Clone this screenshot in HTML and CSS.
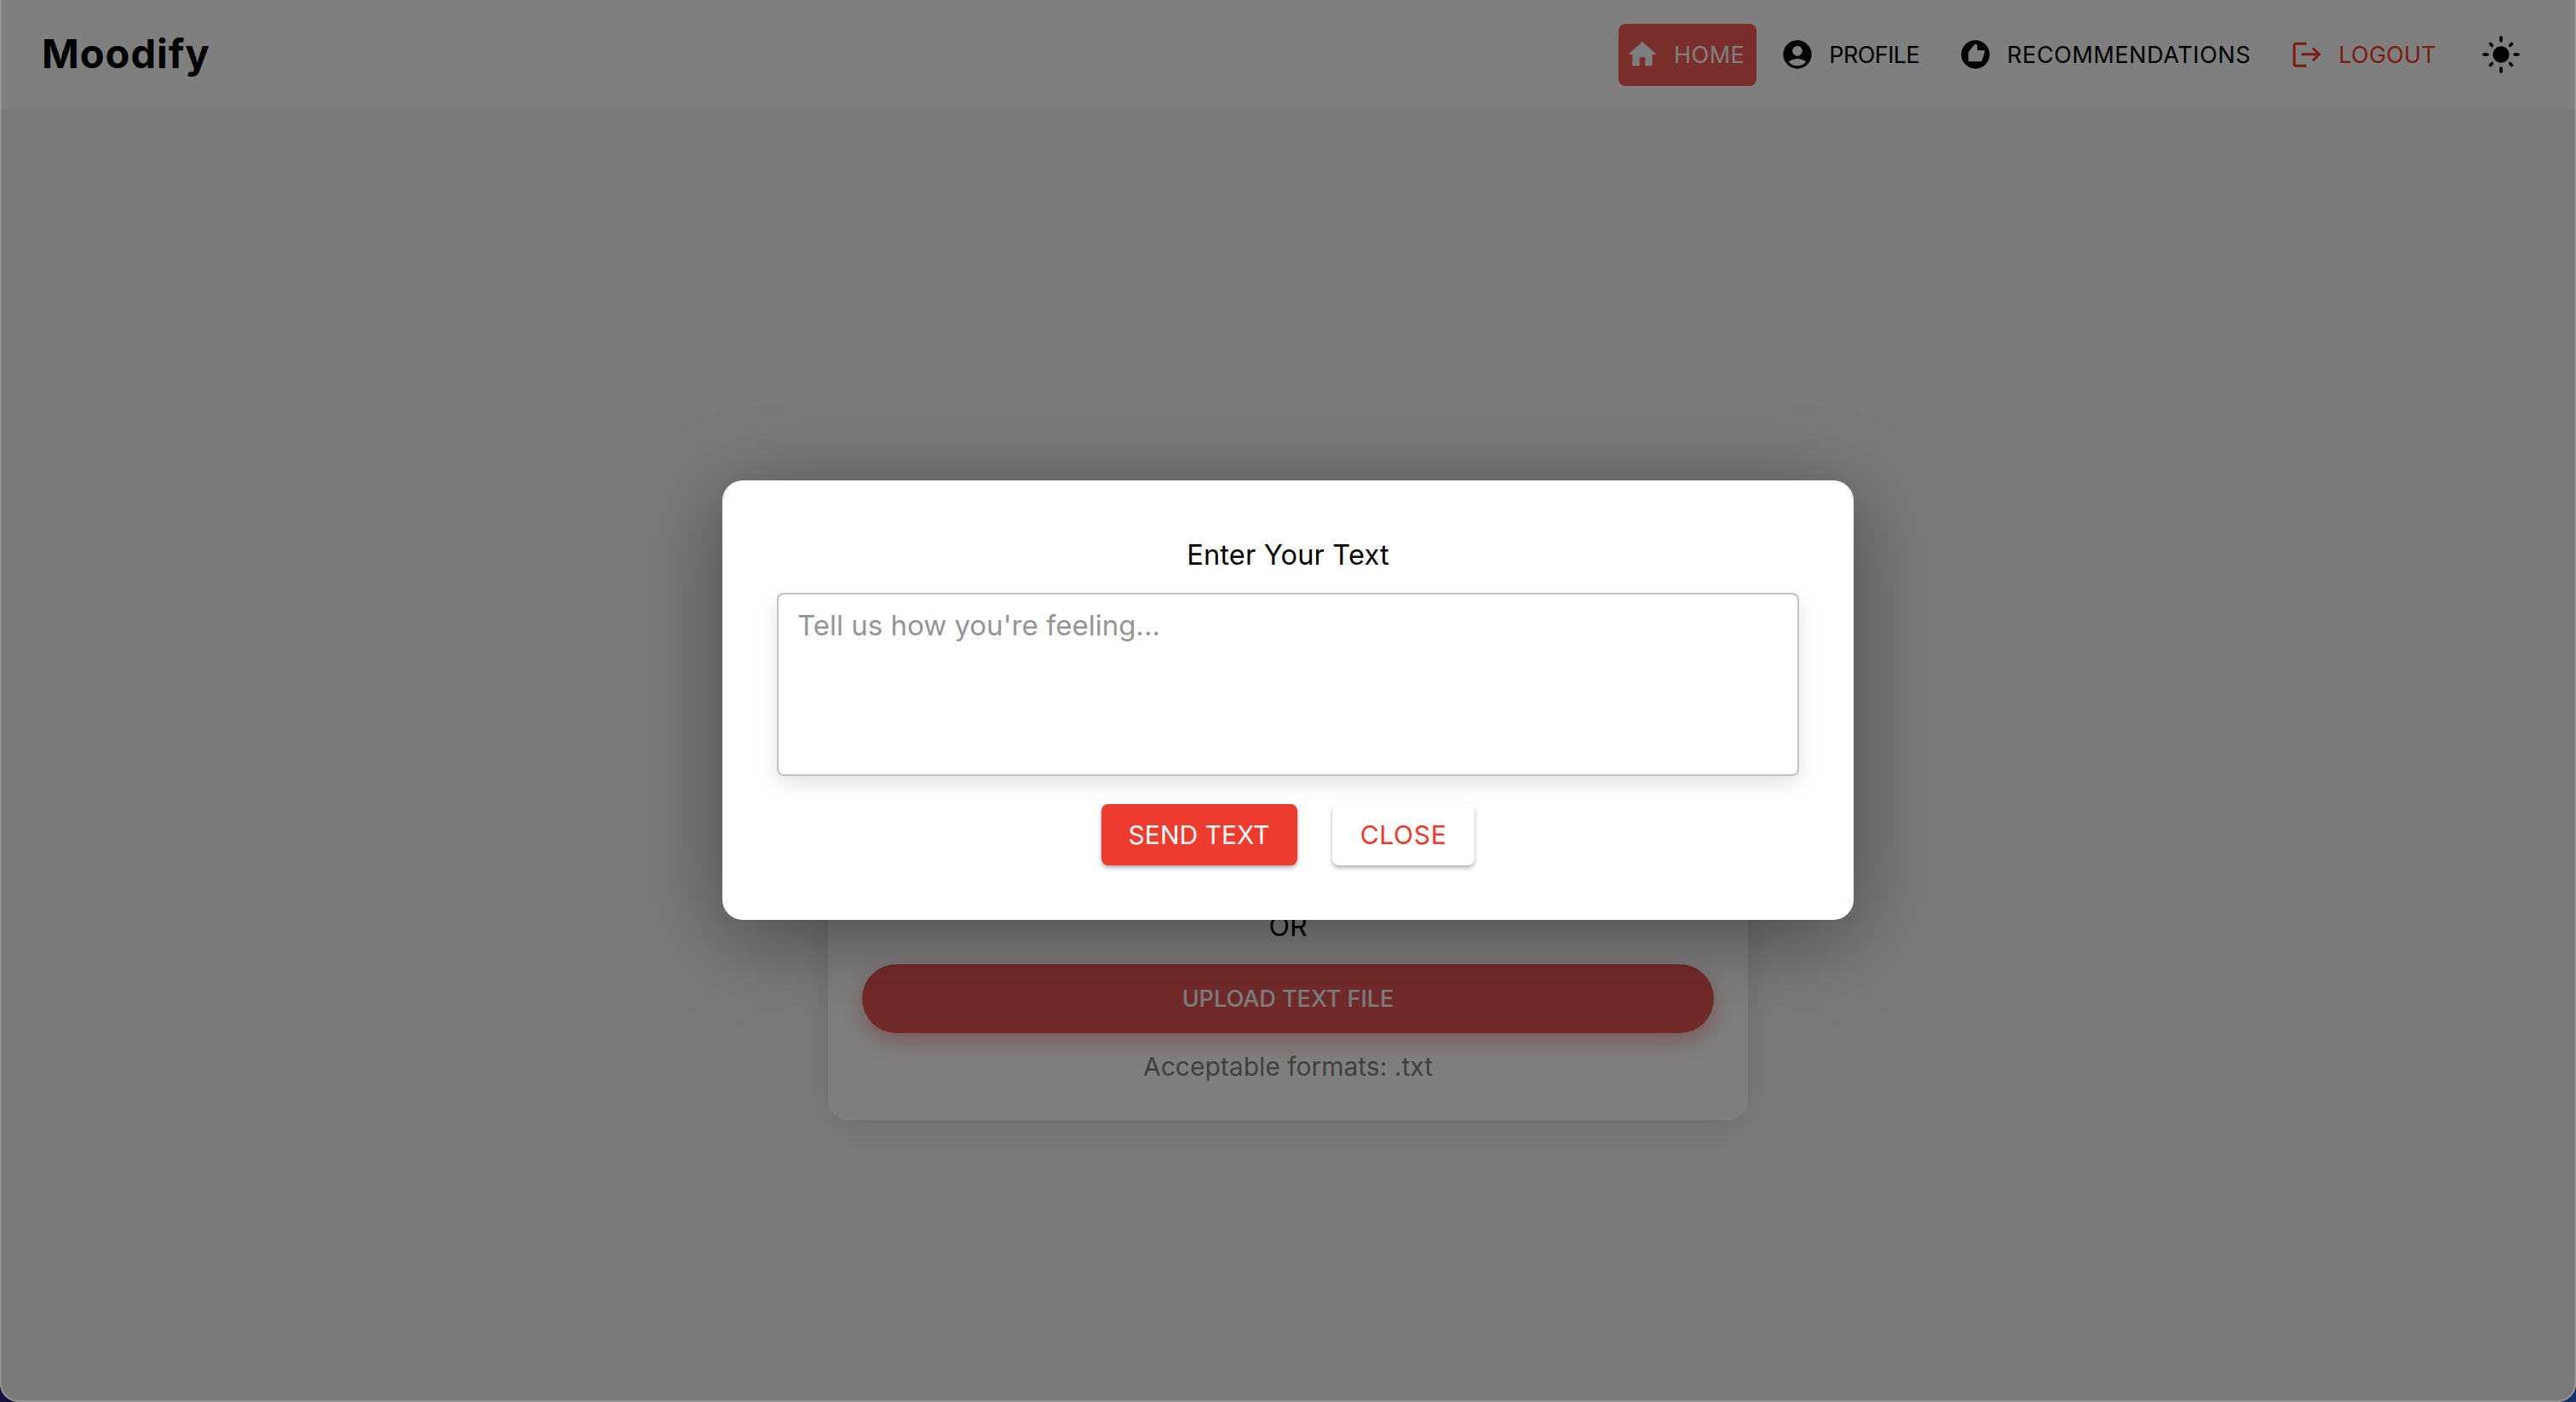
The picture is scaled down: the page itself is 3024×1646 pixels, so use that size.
FILE: index.html
```html
<!DOCTYPE html>
<html lang="en">
<head>
<meta charset="utf-8">
<title>Moodify</title>
<link rel="stylesheet" href="styles.css">
</head>
<body>
<div class="window">
  <header class="nav">
    <div class="brand">Moodify</div>
    <nav class="links">
      <a class="link active"><svg class="icon" viewBox="0 0 24 24"><path d="M10 20v-6h4v6h5v-8h3L12 3 2 12h3v8z"/></svg><span class="t-home">HOME</span></a>
      <a class="link"><svg class="icon" viewBox="0 0 24 24"><path d="M12 2C6.48 2 2 6.48 2 12s4.48 10 10 10 10-4.48 10-10S17.52 2 12 2zm0 4c1.93 0 3.5 1.57 3.500 3.500S13.930 13 12 13s-3.500-1.570-3.500-3.500S10.070 6 12 6zm0 14c-2.030 0-4.430-.820-6.140-2.880C7.550 15.800 9.680 15 12 15s4.450.800 6.140 2.120C16.430 19.180 14.030 20 12 20z"/></svg><span class="t-profile">PROFILE</span></a>
      <a class="link"><svg class="icon" viewBox="0 0 24 24"><path fill-rule="evenodd" d="M12 2C6.480 2 2 6.480 2 12s4.480 10 10 10 10-4.480 10-10S17.520 2 12 2zM7 10.200 11.400 5c.6-.7 1.900-.3 1.900.8V9h4.200c.8 0 1.200.7 1 1.400l-1.900 6c-.1.4-.5.6-.9.6H8c-.6 0-1-.4-1-1z"/></svg><span class="t-rec">RECOMMENDATIONS</span></a>
      <a class="link danger"><svg class="icon line" viewBox="0 0 40 40"><path d="M19.700 7.300H7.200a2 2 0 0 0-2 2v22a2 2 0 0 0 2 2h12.500"/><path d="M13.700 19.800h21M27 12.500l7.500 7.300-7.500 7.300"/></svg><span class="t-logout">LOGOUT</span></a>
      <button class="theme" aria-label="theme"><svg class="sun" viewBox="0 0 44 44"><circle cx="22" cy="22" r="9.700"/><g class="rays"><path d="M22 2v4M22 38v4M2 22h4M38 22h4M9.500 9.500l2 2M32.500 32.500l2 2M9.500 34.500l2-2M32.500 11.500l2-2"/></g></svg></button>
    </nav>
  </header>
  <main class="main">
    <section class="card">
      <p class="or">OR</p>
      <button class="upload">UPLOAD TEXT FILE</button>
      <p class="formats">Acceptable formats: .txt</p>
    </section>
  </main>
  <div class="overlay">
    <div class="modal">
      <h2 class="title">Enter Your Text</h2>
      <textarea class="input" placeholder="Tell us how you're feeling..."></textarea>
      <div class="actions">
        <button class="btn primary">SEND TEXT</button>
        <button class="btn secondary">CLOSE</button>
      </div>
    </div>
  </div>
</div>
</body>
</html>
```
FILE: styles.css
```css
* { box-sizing: border-box; }
html, body { margin: 0; height: 100%; }
body {
  background: linear-gradient(90deg, #1a1040 0%, #1c2f6a 100%);
  font-family: "Inter", "Noto Sans", sans-serif;
  overflow: hidden;
}
.window {
  position: relative;
  height: 1646px;
  display: flex;
  flex-direction: column;
  background: #f5f5f5;
  border-radius: 0 0 22px 22px;
  overflow: hidden;
}
.nav {
  height: 128px;
  flex: none;
  display: flex;
  align-items: center;
  justify-content: space-between;
  padding: 0 66px 0 49px;
  background: #fff;
}
.brand { font-size: 47px; font-weight: 700; color: #000; letter-spacing: 1px; padding-bottom: 3px; }
.links { display: flex; align-items: center; gap: 20px; }
.link {
  display: flex;
  align-items: center;
  gap: 17px;
  height: 73px;
  padding: 0 18px 0 8px;
  border-radius: 8px;
  font-size: 27px;
  color: #000;
  white-space: nowrap;
}
.link.active { background: #f45c58; color: #fff; padding-right: 14px; }
.link.danger { color: #f4362a; }
.t-home { letter-spacing: 0.5px; }
.t-profile { letter-spacing: -0.6px; }
.t-rec { letter-spacing: 0.6px; }
.t-logout { letter-spacing: 0.2px; }
.icon { width: 40px; height: 40px; fill: currentColor; flex: none; }
.icon.line { fill: none; stroke: currentColor; stroke-width: 3; }
.theme { border: 0; background: none; padding: 0; margin-left: 16px; display: flex; }
.sun { width: 44px; height: 44px; fill: #000; }
.rays { fill: none; stroke: #000; stroke-width: 3.6; stroke-linecap: round; }
.main { flex: 1; display: flex; justify-content: center; align-items: flex-start; padding-top: 500px; }
.card {
  width: 1080px;
  height: 687px;
  padding: 0 40px 42px;
  display: flex;
  flex-direction: column;
  align-items: center;
  justify-content: flex-end;
  background: #fff;
  border-radius: 24px;
  box-shadow: 0 4px 40px rgba(0,0,0,.12);
}
.or { margin: 0 0 20px; font-size: 32px; color: #000; line-height: 48px; }
.upload {
  width: 1000px;
  height: 81px;
  border: 0;
  border-radius: 41px;
  background: #e65654;
  color: #fff;
  font: 500 27px "Inter", "Noto Sans", sans-serif;
  box-shadow: 0 10px 26px rgba(230,86,84,.45);
}
.formats { margin: 18px 0 0; font-size: 30px; line-height: 42px; color: #808080; }
.overlay {
  position: absolute;
  inset: 0;
  display: flex;
  align-items: center;
  justify-content: center;
  background: rgba(0,0,0,.5);
  border: 2px solid rgba(255,255,255,.18);
  border-top: 0;
  border-radius: 0 0 22px 22px;
}
.modal {
  width: 1328px;
  height: 516px;
  padding: 64px 64px 0;
  display: flex;
  flex-direction: column;
  align-items: center;
  background: #fff;
  border-radius: 24px;
  box-shadow: 0 20px 100px rgba(0,0,0,.4);
}
.title { margin: 0; font-size: 32.5px; font-weight: 400; line-height: 48px; letter-spacing: 0.2px; color: #000; }
.input {
  width: 1200px;
  height: 215px;
  margin-top: 20px;
  padding: 14px 22px;
  resize: none;
  border: 2px solid #c4c4c4;
  border-radius: 8px;
  font: 33px/44px "Inter", "Noto Sans", sans-serif;
  box-shadow: 0 8px 24px rgba(0,0,0,.12);
  background: #fff;
}
.input::placeholder { color: #959595; opacity: 1; }
.actions { display: flex; gap: 41px; margin-top: 33px; }
.btn {
  height: 72px;
  padding: 0 33px;
  border: 0;
  border-radius: 8px;
  font: 400 30px "Inter", "Noto Sans", sans-serif;
  box-shadow: 0 3px 5px rgba(0,0,0,.3);
}
.primary { background: #ee3b2f; color: #fff; padding: 0 32px; }
.secondary { background: #fff; color: #f4362a; letter-spacing: 0.7px; }
```
